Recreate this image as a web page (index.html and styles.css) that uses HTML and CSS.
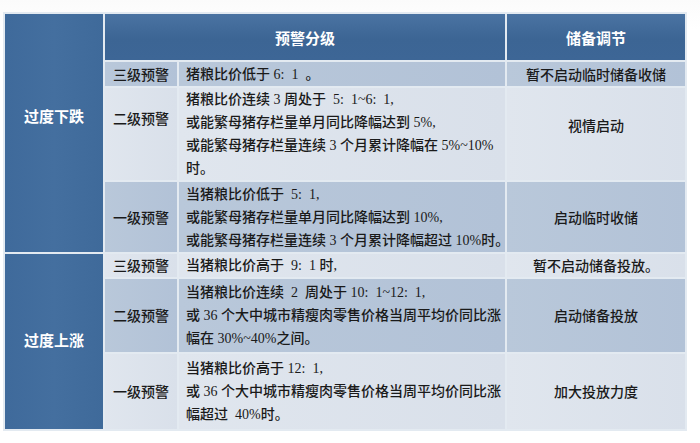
FILE: index.html
```html
<!DOCTYPE html>
<html lang="zh-CN">
<head>
<meta charset="utf-8">
<title>预警分级</title>
<link rel="stylesheet" href="styles.css">
</head>
<body>
<div class="page">
<table class="warn">
  <colgroup>
    <col class="c1"><col class="c2"><col class="c3"><col class="c4">
  </colgroup>
  <tr class="h-head">
    <td class="side side-down" rowspan="4">过度下跌</td>
    <th colspan="2" class="head">预警分级</th>
    <th class="head">储备调节</th>
  </tr>
  <tr class="dark h24">
    <td class="lvl">三级预警</td>
    <td class="txt">猪粮比价低于 6:&nbsp;&nbsp;1 &nbsp;。</td>
    <td class="act">暂不启动临时储备收储</td>
  </tr>
  <tr class="light h92">
    <td class="lvl lvl-up">二级预警</td>
    <td class="txt">猪粮比价连续 3 周处于 &nbsp;5:&nbsp; 1~6:&nbsp; 1,<br>或能繁母猪存栏量单月同比降幅达到 5%,<br>或能繁母猪存栏量连续 3 个月累计降幅在 5%~10%<br>时。</td>
    <td class="act act-up">视情启动</td>
  </tr>
  <tr class="dark h70">
    <td class="lvl">一级预警</td>
    <td class="txt">当猪粮比价低于 &nbsp;5:&nbsp; 1,<br>或能繁母猪存栏量单月同比降幅达到 10%,<br>或能繁母猪存栏量连续 3 个月累计降幅超过 10%时。</td>
    <td class="act">启动临时收储</td>
  </tr>
  <tr class="light h23">
    <td class="side side-up" rowspan="3">过度上涨</td>
    <td class="lvl">三级预警</td>
    <td class="txt">当猪粮比价高于 &nbsp;9:&nbsp; 1 时,</td>
    <td class="act">暂不启动储备投放。</td>
  </tr>
  <tr class="dark h73">
    <td class="lvl">二级预警</td>
    <td class="txt">当猪粮比价连续 &nbsp;2 &nbsp;周处于 10:&nbsp; 1~12:&nbsp; 1,<br>或 36 个大中城市精瘦肉零售价格当周平均价同比涨<br>幅在 30%~40%之间。</td>
    <td class="act">启动储备投放</td>
  </tr>
  <tr class="light h75">
    <td class="lvl">一级预警</td>
    <td class="txt">当猪粮比价高于 12:&nbsp; 1,<br>或 36 个大中城市精瘦肉零售价格当周平均价同比涨<br>幅超过 &nbsp;40%时。</td>
    <td class="act">加大投放力度</td>
  </tr>
</table>
</div>
</body>
</html>
```

FILE: styles.css
```css
html, body {
  margin: 0;
  padding: 0;
  background: #ffffff;
}

.page {
  width: 700px;
  height: 443px;
  padding: 12px 0 0 3px;
  box-sizing: border-box;
  background: linear-gradient(#fbfbfb, #ffffff 30px);
}

.warn {
  border-collapse: separate;
  border-spacing: 2px;
  background: #e3eaf1;
  table-layout: fixed;
  width: 684px;
  font-family: "Noto Sans CJK SC", sans-serif;
  font-size: 14px;
  font-weight: 500;
  color: #1a1a1a;
}

.c1 { width: 98px; }
.c2 { width: 72px; }
.c3 { width: 326px; }
.c4 { width: 178px; }

.warn td, .warn th {
  padding: 0;
  vertical-align: middle;
  box-sizing: border-box;
}

.head {
  height: 46px;
  background: linear-gradient(#4a73a2, #3c6594 55%, #3d6696);
  color: #ffffff;
  font-weight: 700;
  font-size: 15px;
  text-align: center;
}

.side {
  background: linear-gradient(90deg, #3f6a9b, #446f9f 50%, #3f6a9a);
  color: #ffffff;
  font-weight: 700;
  font-size: 15px;
  text-align: center;
}

.side-down { padding-bottom: 36px !important; }
.side-up { padding-bottom: 4px !important; }

.h24 td { height: 24px; }
.h92 td { height: 92px; }
.h70 td { height: 70px; }
.h23 td { height: 23px; }
.h73 td { height: 73px; }
.h75 td { height: 75px; }

.dark .lvl, .dark .txt, .dark .act {
  background: linear-gradient(90deg, #b9c8da, #b2c2d7);
}

.light .lvl, .light .txt, .light .act {
  background: linear-gradient(90deg, #e0e6ee, #d9e0ea);
}

.lvl {
  text-align: center;
  line-height: 23px;
}

.lvl-up { padding-bottom: 32px !important; }

.txt {
  font-family: "Liberation Serif", "Noto Sans CJK SC", serif;
  padding-left: 7px !important;
  line-height: 23px;
  white-space: nowrap;
}

.act {
  text-align: center;
  line-height: 23px;
}

.act-up { padding-bottom: 18px !important; }
```
